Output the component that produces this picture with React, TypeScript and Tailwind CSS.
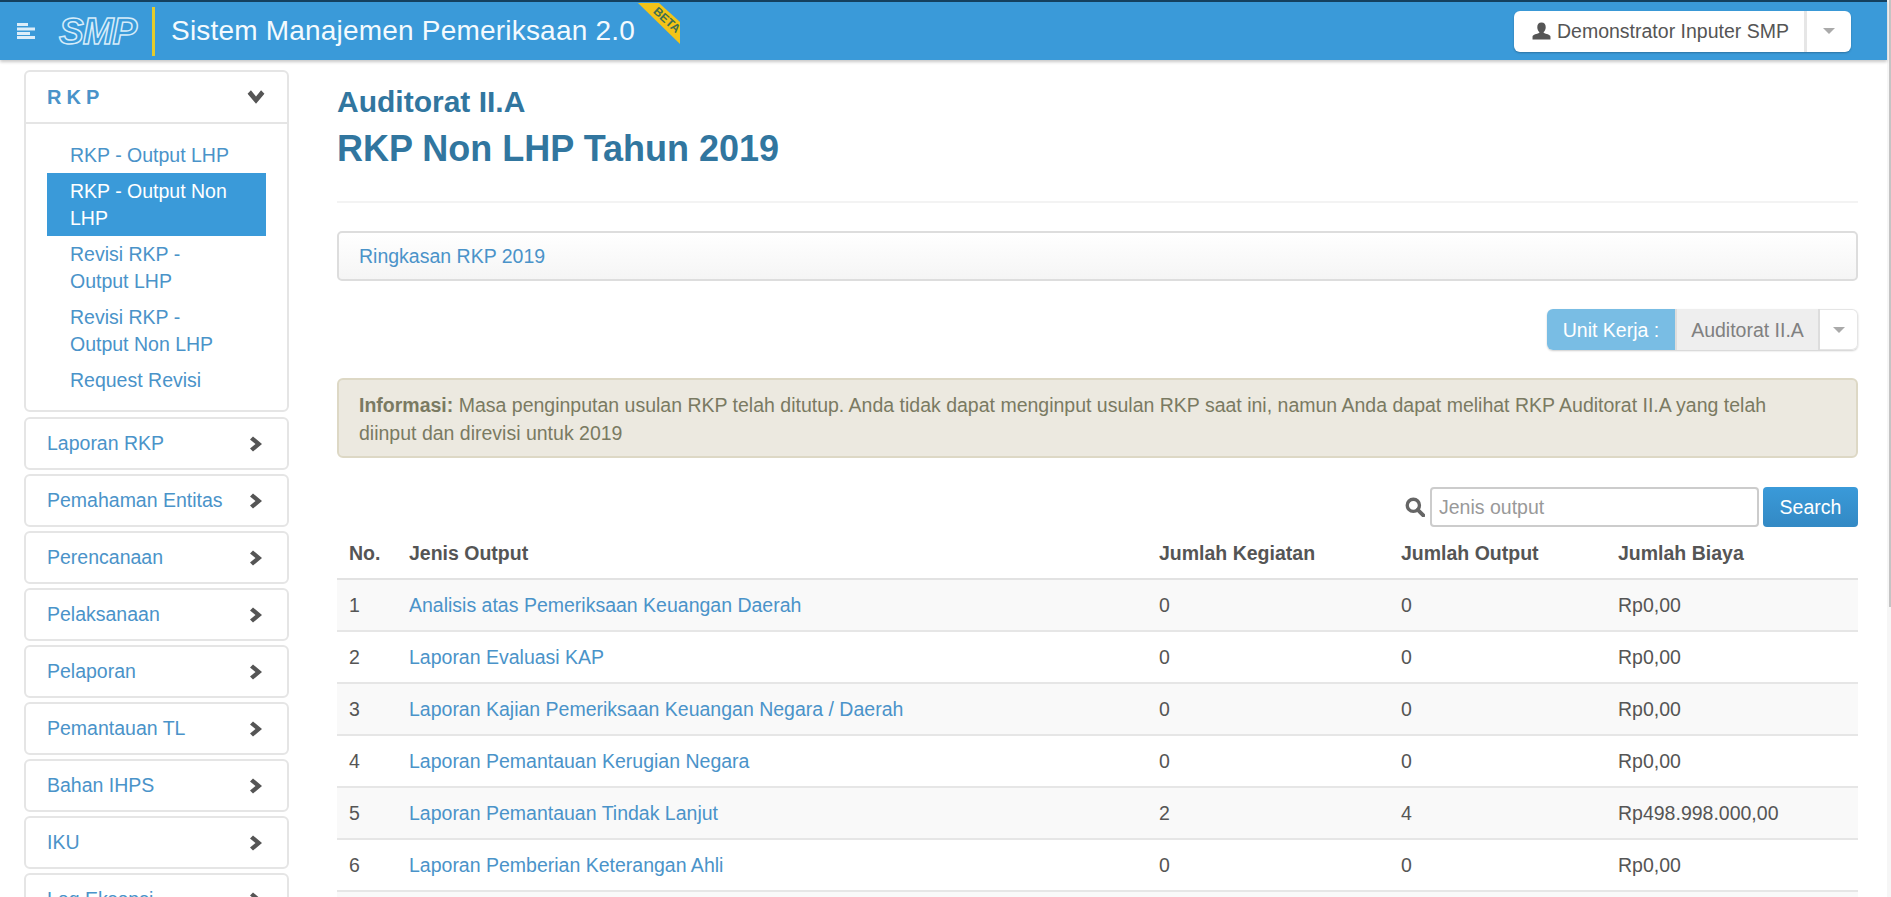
const sideItems = ['Laporan RKP', 'Pemahaman Entitas', 'Perencanaan', 'Pelaksanaan', 'Pelaporan', 'Pemantauan TL', 'Bahan IHPS', 'IKU', 'Log Eksepsi']

const rows = [
  { no: 1, name: 'Analisis atas Pemeriksaan Keuangan Daerah', kegiatan: 0, output: 0, biaya: 'Rp0,00' },
  { no: 2, name: 'Laporan Evaluasi KAP', kegiatan: 0, output: 0, biaya: 'Rp0,00' },
  { no: 3, name: 'Laporan Kajian Pemeriksaan Keuangan Negara / Daerah', kegiatan: 0, output: 0, biaya: 'Rp0,00' },
  { no: 4, name: 'Laporan Pemantauan Kerugian Negara', kegiatan: 0, output: 0, biaya: 'Rp0,00' },
  { no: 5, name: 'Laporan Pemantauan Tindak Lanjut', kegiatan: 2, output: 4, biaya: 'Rp498.998.000,00' },
  { no: 6, name: 'Laporan Pemberian Keterangan Ahli', kegiatan: 0, output: 0, biaya: 'Rp0,00' },
]

function Caret() {
  return <span className="w-0 h-0 border-x-[6px] border-x-transparent border-t-[6px] border-t-[#aaaaaa]" />
}

function ChevronIcon({ down }: { down?: boolean }) {
  return (
    <svg viewBox="0 0 14 16" className={down ? 'w-[20px] h-[18px] rotate-90' : 'w-[14px] h-[16px]'}>
      <path d="M4 0.5 L13 8 L4 15.5 L1 12.5 L6.5 8 L1 3.5 Z" fill="#555555" />
    </svg>
  )
}

function Header() {
  return (
    <header className="relative z-10 h-[60px] shrink-0 flex items-center bg-[#3a9ad9] border-t-2 border-[#14405f] shadow-[0_2px_3px_rgba(0,0,0,0.22)]">
      <svg viewBox="0 0 18 16" className="w-[18px] h-[16px] ml-[17px]" fill="#dcedf9">
        <rect x="0" y="0" width="11" height="3" />
        <rect x="0" y="4.5" width="18" height="3" />
        <rect x="0" y="9" width="13" height="3" />
        <rect x="0" y="13" width="18" height="3" />
      </svg>
      <span className="ml-[24px] w-[84px] text-[37px] leading-none font-bold italic text-transparent tracking-[-1px] [-webkit-text-stroke:1.5px_#d6ecfa]">SMP</span>
      <span className="ml-[9px] w-[3px] h-[49px] bg-[#e3cb2c]" />
      <span className="ml-[16px] text-[28px] leading-none text-[#f4fafe] tracking-[0.2px]">Sistem Manajemen Pemeriksaan 2.0</span>
      <div className="absolute left-[638px] top-[1px] w-[42px] h-[41px]">
        <svg viewBox="0 0 42 41" className="w-[42px] h-[41px]">
          <polygon points="0,0 21,0 42,19 42,41" fill="#f4c417" />
        </svg>
        <span className="absolute left-[13px] top-[11px] text-[12px] leading-none font-bold text-[#3f6f52] rotate-[42deg]">BETA</span>
      </div>
      <div className="ml-auto mr-[36px] flex h-[41px] w-[337px] rounded-[6px] bg-white shadow-[0_1px_2px_rgba(0,0,0,0.25)] text-[#555555]">
        <div className="flex items-center w-[293px] pl-[18px] border-r-[3px] border-[#e6e6e6]">
          <svg viewBox="0 0 18 16" className="w-[19px] h-[18px]" fill="#555555">
            <path d="M9 0 C6.3 0 5 2 5 4.4 C5 6.4 5.9 8 6.9 9 L6.9 10 C4.5 10.8 1 11.6 0.5 13.2 L0.5 16 L17.5 16 L17.5 13.2 C17 11.6 13.5 10.8 11.1 10 L11.1 9 C12.1 8 13 6.4 13 4.4 C13 2 11.7 0 9 0 Z" />
          </svg>
          <span className="ml-[6px]">Demonstrator Inputer SMP</span>
        </div>
        <div className="flex-1 flex items-center justify-center"><Caret /></div>
      </div>
    </header>
  )
}

function Sidebar() {
  return (
    <aside className="w-[265px] shrink-0 flex flex-col gap-[4px]">
      <div className="h-[342px] mb-[1px] rounded-[6px] border-2 border-[#e5e5e5] bg-white">
        <div className="h-[52px] flex items-center justify-between pl-[21px] pr-[21px] border-b-2 border-[#e5e5e5]">
          <span className="font-bold text-[20px] text-[#4a93c9] tracking-[5px]">RKP</span>
          <ChevronIcon down />
        </div>
        <nav className="flex flex-col mt-[11px] mx-[21px] text-[#4a93c9]">
          <a className="h-[38px] pl-[23px] pt-[6px]">RKP - Output LHP</a>
          <a className="h-[63px] pl-[23px] pr-[24px] pt-[5px] leading-[27px] bg-[#3a9ad9] text-white">RKP - Output Non LHP</a>
          <a className="h-[63px] pl-[23px] pr-[50px] pt-[5px] leading-[27px]">Revisi RKP - Output LHP</a>
          <a className="h-[63px] pl-[23px] pr-[50px] pt-[5px] leading-[27px]">Revisi RKP - Output Non LHP</a>
          <a className="pl-[23px] pt-[4px]">Request Revisi</a>
        </nav>
      </div>
      {sideItems.map((item) => (
        <div key={item} className="h-[53px] shrink-0 flex items-center justify-between pl-[21px] pr-[24px] rounded-[6px] border-2 border-[#e5e5e5] bg-white text-[#4a93c9]">
          <span className="pb-[2px]">{item}</span>
          <ChevronIcon />
        </div>
      ))}
    </aside>
  )
}

function Content() {
  return (
    <main className="w-[1521px] ml-[48px] text-[#555555]">
      <h3 className="mt-[14px] text-[30px] leading-[36px] font-bold text-[#31769f]">Auditorat II.A</h3>
      <h1 className="mt-[7px] text-[36px] leading-[44px] font-bold text-[#31769f]">RKP Non LHP Tahun 2019</h1>
      <hr className="mt-[30px] border-t-2 border-[#f3f3f3]" />
      <div className="mt-[28px] h-[50px] flex items-center pl-[20px] rounded-[5px] border-2 border-[#dddddd] bg-gradient-to-b from-white to-[#f5f5f5] text-[#4a93c9]">
        Ringkasan RKP 2019
      </div>
      <div className="mt-[28px] flex justify-end">
        <div className="flex h-[41px] w-[311px] rounded-[6px] shadow-[0_1px_2px_rgba(0,0,0,0.2)]">
          <span className="w-[128px] flex items-center justify-center rounded-l-[6px] bg-[#79bde4] text-white">Unit Kerja :</span>
          <span className="w-[145px] flex items-center justify-center bg-[#eeeeee] text-[#808080] border-x-2 border-[#dddddd]">Auditorat II.A</span>
          <span className="flex-1 flex items-center justify-center rounded-r-[6px] bg-white border-y border-r border-[#e5e5e5]"><Caret /></span>
        </div>
      </div>
      <div className="mt-[28px] h-[80px] pl-[20px] pr-[60px] py-[11px] rounded-[6px] border-2 border-[#ddd8c5] bg-[#ece9e0] text-[#7a7a62]">
        <strong>Informasi:</strong> Masa penginputan usulan RKP telah ditutup. Anda tidak dapat menginput usulan RKP saat ini, namun Anda dapat melihat RKP Auditorat II.A yang telah diinput dan direvisi untuk 2019
      </div>
      <div className="mt-[29px] flex justify-end items-center h-[40px]">
        <svg viewBox="0 0 18 18" className="w-[20px] h-[20px] mr-[5px]" fill="none" stroke="#666666">
          <circle cx="7.5" cy="7.5" r="5.5" strokeWidth="3" />
          <path d="M11.5 11.5 L16.5 16.5" strokeWidth="3.5" strokeLinecap="round" />
        </svg>
        <input readOnly placeholder="Jenis output" className="w-[329px] h-[40px] px-[7px] rounded-[4px] border-2 border-[#cccccc] bg-white placeholder:text-[#999999] outline-none" />
        <button className="ml-[4px] w-[95px] h-[40px] rounded-[4px] bg-gradient-to-b from-[#3a9ad9] to-[#3389c4] text-white">Search</button>
      </div>
      <table className="w-full table-fixed">
        <thead>
          <tr className="h-[52px] border-b-2 border-[#e2e2e2] text-left">
            <th className="w-[61px] pl-[12px] font-bold">No.</th>
            <th className="w-[750px] px-[11px] font-bold">Jenis Output</th>
            <th className="w-[242px] px-[11px] font-bold">Jumlah Kegiatan</th>
            <th className="w-[217px] px-[11px] font-bold">Jumlah Output</th>
            <th className="px-[11px] font-bold">Jumlah Biaya</th>
          </tr>
        </thead>
        <tbody>
          {rows.map((r) => (
            <tr key={r.no} className="h-[52px] border-b-2 border-[#e6e6e6] odd:bg-[#f9f9f9]">
              <td className="pl-[12px]">{r.no}</td>
              <td className="px-[11px] text-[#4a93c9]">{r.name}</td>
              <td className="px-[11px]">{r.kegiatan}</td>
              <td className="px-[11px]">{r.output}</td>
              <td className="px-[11px]">{r.biaya}</td>
            </tr>
          ))}
          <tr className="h-[52px] bg-[#f9f9f9]"><td colSpan={5} /></tr>
        </tbody>
      </table>
    </main>
  )
}

export default function App() {
  return (
    <div className="flex h-[897px] w-[1891px] overflow-hidden bg-white font-['Liberation_Sans',Arial,sans-serif] text-[19.5px] leading-[28px]">
      <div className="w-[1887px] shrink-0 flex flex-col">
        <Header />
        <div className="flex pl-[24px] pt-[10px]">
          <Sidebar />
          <Content />
        </div>
      </div>
      <div className="flex-1 flex justify-end bg-[#f6f6f6]">
        <div className="w-[2px] h-[607px] bg-[#c4c4c4]" />
      </div>
    </div>
  )
}
